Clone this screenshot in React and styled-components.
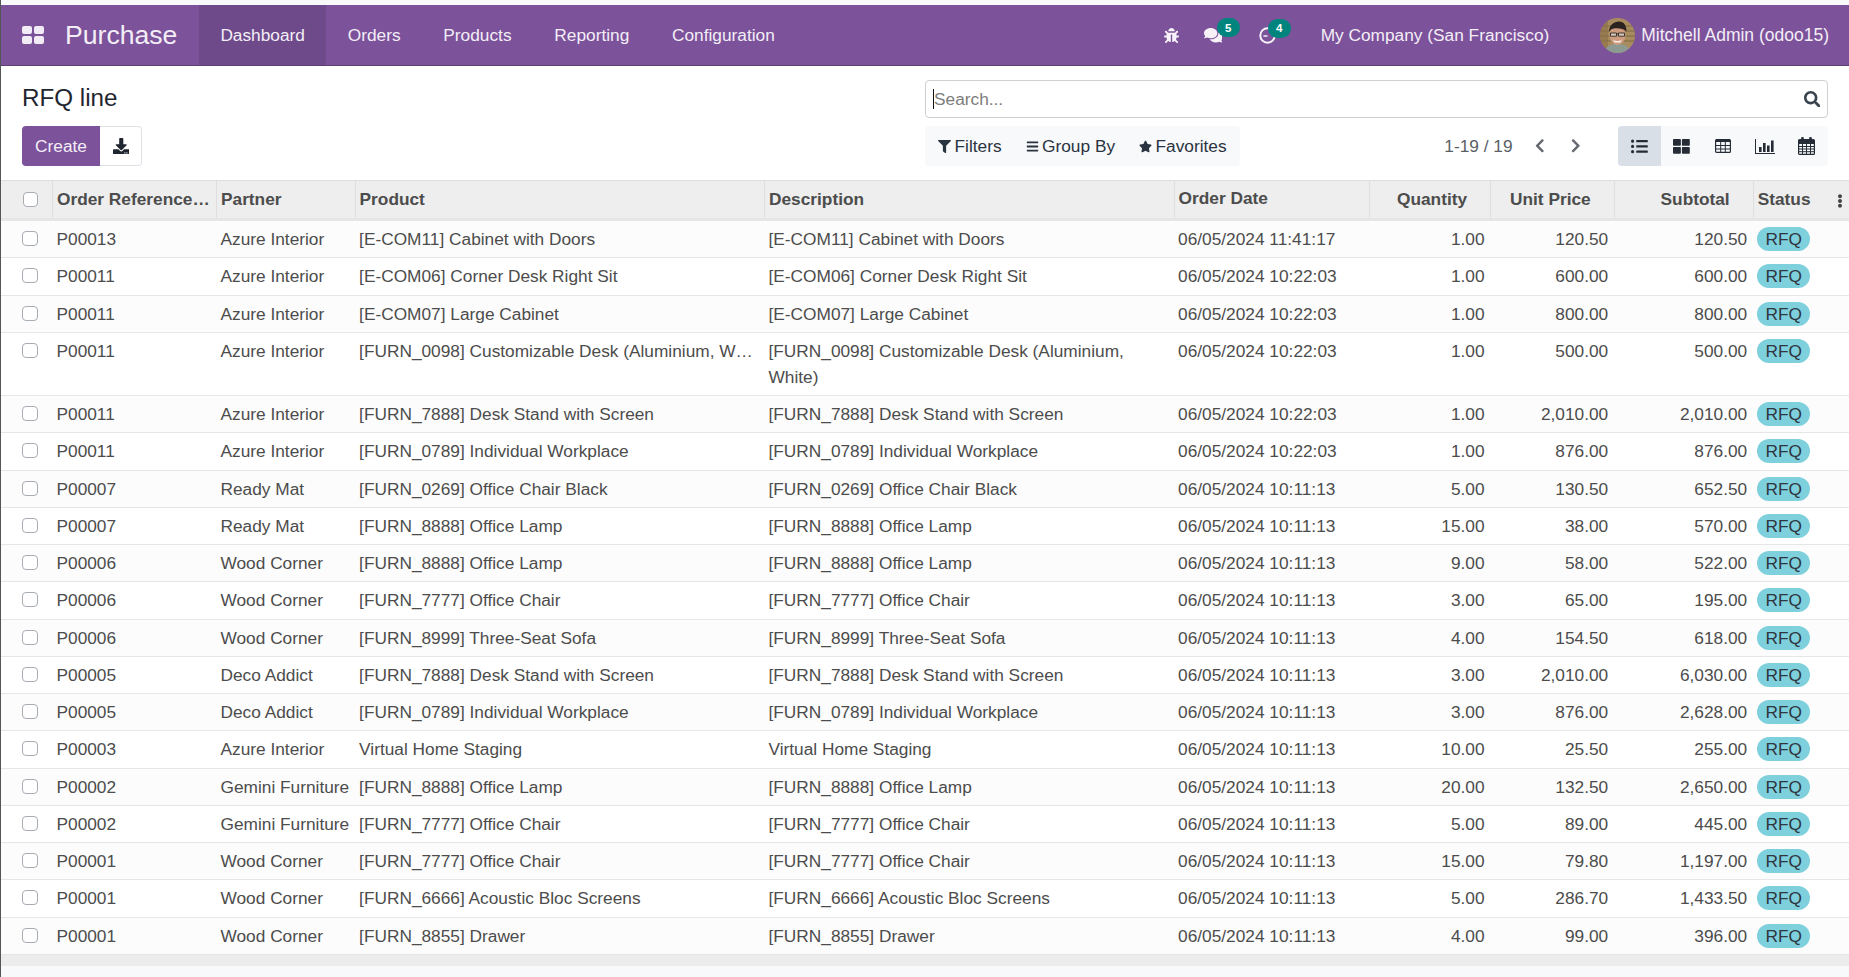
import React from "react";
import styled, { createGlobalStyle } from "styled-components";
import { FaBug, FaComments, FaDownload, FaFilter, FaBars, FaStar, FaSearch, FaChevronLeft, FaChevronRight, FaListUl, FaThLarge, FaEllipsisV } from "react-icons/fa";

const Global = createGlobalStyle`
  html, body { margin: 0; padding: 0; background: #f8f9fb; }
  body { font-family: "Liberation Sans", Arial, sans-serif; font-size: 17.3px; color: #4c4c4c; }
`;
const Shell = styled.div`
  height: 977px; box-sizing: border-box; padding-top: 5px; border-left: 1px solid #555; overflow: hidden;
  background: #f8f9fb; display: flex; flex-direction: column;
`;
const Nav = styled.header`
  height: 61px; flex: none; box-sizing: border-box; background: #7c529b; border-bottom: 1px solid #5f3f78;
  display: flex; align-items: stretch; color: #f3eef6; padding-left: 21px;
`;
const AppsIcon = styled.div`
  display: grid; grid-template-columns: 10px 10px; grid-auto-rows: 8.5px; gap: 1.5px; align-content: center; width: 21.5px; margin-right: 21.5px;
  i { background: #f1ecf5; border-radius: 2px; display: block; }
`;
const Brand = styled.div`font-size: 26.6px; display: flex; align-items: center; width: 134px;`;
const NavItem = styled.a`
  display: flex; align-items: center; padding: 0 21.4px; background: ${p => p.$active ? "#6e4a8b" : "transparent"};
`;
const NavRight = styled.div`margin-left: auto; display: flex; align-items: center; padding-right: 20px;`;
const NavIcon = styled.span`
  position: relative; display: inline-flex; font-size: ${p => p.$size}px; margin-right: ${p => p.$gap}px; color: #f6f2f8;
`;
const Count = styled.b`
  position: absolute; top: ${p => p.$top}px; left: ${p => p.$left}px; width: 23px; height: 19px; border-radius: 10px; background: #00857e;
  color: #fff; font-size: 11.5px; display: flex; align-items: center; justify-content: center;
`;
const Company = styled.span`margin-left: 45px; white-space: nowrap;`;
const UserName = styled.span`white-space: nowrap; font-size: 17.5px;`;
const Avatar = styled.svg`width: 35px; height: 35px; border-radius: 50%; margin: 0 6px 0 51px; flex: none;`;

const Panel = styled.section`
  background: #fff; flex: none; height: 114px; box-sizing: border-box; padding: 14px 21px 0; display: grid;
  grid-template-columns: 903px 903px; justify-content: space-between; grid-template-rows: 38px 40px; row-gap: 8px;
`;
const Title = styled.h1`margin: 0; font-weight: 400; font-size: 24.2px; line-height: 36px; color: #1f2630;`;
const SearchBox = styled.div`
  box-sizing: border-box; border: 1.5px solid #cfcfcf; border-radius: 4px; display: flex; align-items: center; padding: 0 7px 0 7px; height: 38px; background: #fff;
`;
const Caret = styled.span`width: 1px; height: 20px; background: #111; flex: none;`;
const Placeholder = styled.span`color: #7d7d7d; flex: 1;`;
const Lens = styled.span`display: inline-flex; font-size: 16.5px; color: #3a4350;`;
const Buttons = styled.div`display: flex;`;
const Primary = styled.button`
  width: 78px; height: 40px; border: 0; border-radius: 4px 0 0 4px; background: #7c529b; color: #f3eef6; font: inherit; padding: 0;
`;
const Secondary = styled.button`
  width: 42px; height: 40px; box-sizing: border-box; border: 1px solid #dfe3e8; border-left: 0; border-radius: 0 4px 4px 0; background: #fff; color: #1f2630; font-size: 16.5px;
  display: flex; align-items: center; justify-content: center; padding: 0 0 0 1px;
`;
const Tools = styled.div`display: flex; align-items: center;`;
const Facets = styled.div`
  width: 315px; height: 40px; background: #f7f9fb; border-radius: 4px; display: flex; align-items: center; padding-left: 13px; box-sizing: border-box; color: #2a3340; white-space: nowrap; flex: none;
`;
const Facet = styled.span`
  display: inline-flex; align-items: center; gap: 3.5px; margin-right: 24px;
  svg { font-size: 13px; }
`;
const Pager = styled.div`margin-left: auto; display: flex; align-items: center; color: #5a5f66; margin-right: 34.5px;`;
const PagerArrow = styled.span`display: inline-flex; margin-left: ${p => p.$gap}px; font-size: 15.5px; color: #666a70;`;
const Views = styled.div`display: flex; height: 40px; background: #f7f9fb; border-radius: 4px; width: 210px; overflow: hidden; flex: none;`;
const View = styled.span`
  width: ${p => p.$active ? 43 : 41.5}px; display: flex; align-items: center; justify-content: center; font-size: 16.8px; color: #252c36;
  background: ${p => p.$active ? "#d8dfe6" : "transparent"};
`;

const Sheet = styled.table`
  width: 1848px; table-layout: fixed; border-collapse: separate; border-spacing: 0; background: #fff; flex: none;
`;
const Th = styled.th`
  box-sizing: border-box; height: 41px; background: #eeeeee; border-top: 1.5px solid #dfdfdf; border-bottom: 3px solid #e6e6e6; font-weight: 700; color: #4c4c4c;
  padding: 0 ${p => p.$right ? "24px" : "4px"} ${p => p.$raise ? "3px" : "0"} 4px; text-align: ${p => p.$right ? "right" : "left"}; white-space: nowrap; position: relative;
  ${p => p.$line ? "box-shadow: inset -1px 0 0 #dedede;" : ""}
`;
const Td = styled.td`
  box-sizing: border-box; height: ${p => p.$h}px; padding: 4.7px ${p => p.$clip ? 3 : 6.5}px 4.7px 3.5px; line-height: 26px; border-bottom: 1px solid #e6e6e6; vertical-align: top;
  text-align: ${p => p.$right ? "right" : "left"}; background: ${p => p.$odd ? "#fcfcfc" : "#fff"}; color: #4c4c4c;
  ${p => p.$clip ? "white-space: nowrap; overflow: hidden; text-overflow: ellipsis;" : ""}
`;
const Check = styled.span`
  display: block; width: 15.5px; height: 15.5px; box-sizing: border-box; border: 1px solid #a8adb3; border-radius: 4px; background: #fff; margin: 5px 0 0 17.5px;
`;
const HeadCheck = styled(Check)`margin-top: 0;`;
const Badge = styled.span`
  display: inline-flex; width: 53px; height: 24px; border-radius: 12px; background: #7dd0dc; color: #2f3640; align-items: center; justify-content: center; margin-top: 1px;
`;
const Kebab = styled.span`position: absolute; right: 2px; top: 13px; display: inline-flex; font-size: 14px; color: #444;`;
const Foot = styled.div`height: 11px; background: #ececec; flex: none;`;

const cols = [52, 164, 138.6, 409.4, 409.6, 195, 121.5, 123.6, 139, 95.3];
const heads = [
  ["Order Reference…", 0, 1], ["Partner", 0, 1], ["Product", 0, 1], ["Description", 0, 1], ["Order Date", 0, 1, 1],
  ["Quantity", 1, 1], ["Unit Price", 1, 1], ["Subtotal", 1, 1],
];
const C = "06/05/2024 10:11:13", D = "06/05/2024 10:22:03";
const rows = [
  ["P00013","Azure Interior","[E-COM11] Cabinet with Doors","06/05/2024 11:41:17","1.00","120.50","120.50"],
  ["P00011","Azure Interior","[E-COM06] Corner Desk Right Sit",D,"1.00","600.00","600.00"],
  ["P00011","Azure Interior","[E-COM07] Large Cabinet",D,"1.00","800.00","800.00"],
  ["P00011","Azure Interior","[FURN_0098] Customizable Desk (Aluminium, White)",D,"1.00","500.00","500.00"],
  ["P00011","Azure Interior","[FURN_7888] Desk Stand with Screen",D,"1.00","2,010.00","2,010.00"],
  ["P00011","Azure Interior","[FURN_0789] Individual Workplace",D,"1.00","876.00","876.00"],
  ["P00007","Ready Mat","[FURN_0269] Office Chair Black",C,"5.00","130.50","652.50"],
  ["P00007","Ready Mat","[FURN_8888] Office Lamp",C,"15.00","38.00","570.00"],
  ["P00006","Wood Corner","[FURN_8888] Office Lamp",C,"9.00","58.00","522.00"],
  ["P00006","Wood Corner","[FURN_7777] Office Chair",C,"3.00","65.00","195.00"],
  ["P00006","Wood Corner","[FURN_8999] Three-Seat Sofa",C,"4.00","154.50","618.00"],
  ["P00005","Deco Addict","[FURN_7888] Desk Stand with Screen",C,"3.00","2,010.00","6,030.00"],
  ["P00005","Deco Addict","[FURN_0789] Individual Workplace",C,"3.00","876.00","2,628.00"],
  ["P00003","Azure Interior","Virtual Home Staging",C,"10.00","25.50","255.00"],
  ["P00002","Gemini Furniture","[FURN_8888] Office Lamp",C,"20.00","132.50","2,650.00"],
  ["P00002","Gemini Furniture","[FURN_7777] Office Chair",C,"5.00","89.00","445.00"],
  ["P00001","Wood Corner","[FURN_7777] Office Chair",C,"15.00","79.80","1,197.00"],
  ["P00001","Wood Corner","[FURN_6666] Acoustic Bloc Screens",C,"5.00","286.70","1,433.50"],
  ["P00001","Wood Corner","[FURN_8855] Drawer",C,"4.00","99.00","396.00"],
];
// table rows snap to whole pixels, so spread the fractional row pitch across the rows
let cum = 0;
const heights = rows.map((_, i) => {
  const next = cum + (i === 3 ? 63.4 : 37.25);
  const h = Math.round(next) - Math.round(cum);
  cum = next;
  return h;
});

const ClockIcon = () => (
  <svg width="17" height="17" viewBox="0 0 17 17" fill="none" stroke="#f6f2f8"><circle cx="8.500" cy="8.500" r="7.200" strokeWidth="2"/><path d="M8.500 9H4.500" strokeWidth="1.500"/></svg>
);
const TableIcon = () => (
  <svg width="16" height="14" viewBox="0 0 16 14" fill="none" stroke="#252c36"><rect x=".6" y=".6" width="14.800" height="12.800" rx="1" strokeWidth="1.200"/><path d="M1 1.800h14" strokeWidth="2.400"/><path d="M1 6.500h14M1 10h14M5.700 3v10M10.300 3v10" strokeWidth="1"/></svg>
);
const Chart = () => (
  <svg width="20" height="15" viewBox="0 0 20 15" fill="currentColor"><path d="M0 0h1v14h19v1H0z"/><rect x="4" y="8" width="2.600" height="5"/><rect x="8" y="4" width="2.600" height="9"/><rect x="12" y="6.500" width="2.600" height="6.500"/><rect x="16" y="1.500" width="2.600" height="11.500"/></svg>
);
const Calendar = () => (
  <svg width="17" height="18" viewBox="0 0 17 18" fill="none"><rect x=".6" y="2.600" width="15.800" height="14.800" rx="1" stroke="#252c36" strokeWidth="1.200"/><rect x="1" y="3" width="15" height="4" fill="#252c36"/><path d="M1 9.500h15M1 12h15M1 14.700h15M4.500 7v10M8.500 7v10M12.500 7v10" stroke="#252c36"/><rect x="3.200" y="0" width="2.600" height="4.500" rx="1" fill="#252c36"/><rect x="11.200" y="0" width="2.600" height="4.500" rx="1" fill="#252c36"/></svg>
);
const Portrait = () => (
  <Avatar viewBox="0 0 35 35">
    <rect width="35" height="35" fill="#a98c5e"/>
    <path d="M0 8h35M0 13h35M0 18h35M0 23h35" stroke="#7d6843" strokeWidth="1"/>
    <rect width="8" height="35" fill="#8a7048" opacity=".6"/>
    <path d="M4 35c1-7 7-9 13.500-9S30 28 31 35z" fill="#8c9a92"/>
    <ellipse cx="17.500" cy="17" rx="8" ry="10" fill="#cf9b7e"/>
    <path d="M9 14C9 7 14 3.500 19 3.500s7.500 4 7.500 10C23 10 15 9.500 11 11.500 10 12.500 9.500 13 9 14z" fill="#2b2320"/>
    <path d="M10.500 15h6v3.200h-6zM18.500 15h6v3.200h-6zM16.500 16h2" fill="#d9c7b8" stroke="#2a2a2a" strokeWidth=".9"/>
    <path d="M13 21.500c2.500 2 6.500 2 9 0l-1.500 3h-6z" fill="#f6efe9"/>
  </Avatar>
);

export default function App() {
  return (
    <Shell>
      <Global />
      <Nav>
        <AppsIcon><i /><i /><i /><i /></AppsIcon>
        <Brand>Purchase</Brand>
        <NavItem $active>Dashboard</NavItem>
        <NavItem>Orders</NavItem>
        <NavItem>Products</NavItem>
        <NavItem>Reporting</NavItem>
        <NavItem>Configuration</NavItem>
        <NavRight>
          <NavIcon $size={15} $gap={25}><FaBug /></NavIcon>
          <NavIcon $size={18.5} $gap={36.5}><FaComments /><Count $left={13} $top={-7.5}>5</Count></NavIcon>
          <NavIcon $size={17} $gap={0}><ClockIcon /><Count $left={9} $top={-8}>4</Count></NavIcon>
          <Company>My Company (San Francisco)</Company>
          <Portrait />
          <UserName>Mitchell Admin (odoo15)</UserName>
        </NavRight>
      </Nav>
      <Panel>
        <Title>RFQ line</Title>
        <SearchBox><Caret /><Placeholder>Search...</Placeholder><Lens><FaSearch /></Lens></SearchBox>
        <Buttons><Primary>Create</Primary><Secondary><FaDownload /></Secondary></Buttons>
        <Tools>
          <Facets>
            <Facet><FaFilter />Filters</Facet>
            <Facet><FaBars />Group By</Facet>
            <Facet><FaStar />Favorites</Facet>
          </Facets>
          <Pager>1-19 / 19<PagerArrow $gap={19}><FaChevronLeft /></PagerArrow><PagerArrow $gap={21}><FaChevronRight /></PagerArrow></Pager>
          <Views>
            <View $active><FaListUl /></View>
            <View><FaThLarge /></View>
            <View><TableIcon /></View>
            <View><Chart /></View>
            <View><Calendar /></View>
          </Views>
        </Tools>
      </Panel>
      <Sheet>
        <colgroup>{cols.map((w, i) => <col key={i} style={{ width: w }} />)}</colgroup>
        <thead>
          <tr>
            <Th $line><HeadCheck /></Th>
            {heads.map(([t, r, l, up]) => <Th key={t} $right={r} $line={l} $raise={up}>{t}</Th>)}
            <Th>Status<Kebab><FaEllipsisV /></Kebab></Th>
          </tr>
        </thead>
        <tbody>
          {rows.map((r, i) => {
            const odd = i % 2 === 0;
            return (
              <tr key={i}>
                <Td $odd={odd} $h={heights[i]}><Check /></Td>
                <Td $odd={odd} $h={heights[i]}>{r[0]}</Td>
                <Td $odd={odd} $h={heights[i]} $clip>{r[1]}</Td>
                <Td $odd={odd} $h={heights[i]} $clip>{r[2]}</Td>
                <Td $odd={odd} $h={heights[i]}>{r[2]}</Td>
                <Td $odd={odd} $h={heights[i]}>{r[3]}</Td>
                <Td $odd={odd} $h={heights[i]} $right>{r[4]}</Td>
                <Td $odd={odd} $h={heights[i]} $right>{r[5]}</Td>
                <Td $odd={odd} $h={heights[i]} $right>{r[6]}</Td>
                <Td $odd={odd} $h={heights[i]}><Badge>RFQ</Badge></Td>
              </tr>
            );
          })}
        </tbody>
      </Sheet>
      <Foot />
    </Shell>
  );
}
